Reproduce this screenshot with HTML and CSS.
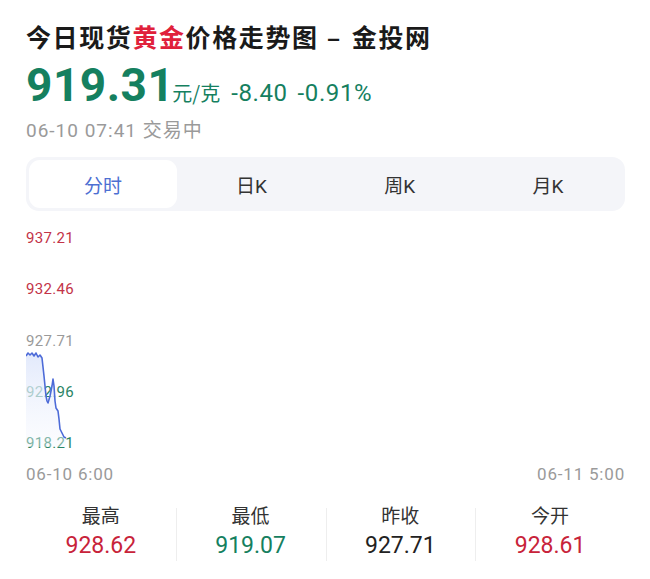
FILE: index.html
```html
<!DOCTYPE html>
<html lang="zh">
<head>
<meta charset="utf-8">
<title>今日现货黄金价格走势图 – 金投网</title>
<link rel="stylesheet" href="styles.css">
</head>
<body>
<div class="page">
  <h1 class="title">今日现货<span class="hl">黄金</span>价格走势图<span class="dash">–</span>金投网</h1>
  <div class="price-row">
    <span class="price">919.31</span>
    <span class="unit">元/克</span>
    <span class="chg">-8.40</span>
    <span class="chg">-0.91%</span>
  </div>
  <div class="meta">06-10 07:41 交易中</div>

  <div class="tabs">
    <div class="tab active">分时</div>
    <div class="tab">日K</div>
    <div class="tab">周K</div>
    <div class="tab">月K</div>
  </div>

  <div class="chart">
    <div class="ylabels">
      <span class="up">937.21</span>
      <span class="up">932.46</span>
      <span class="flat">927.71</span>
      <span class="down">922.96</span>
      <span class="down">918.21</span>
    </div>
    <svg class="plot" viewBox="0 0 599 223" preserveAspectRatio="none" xmlns="http://www.w3.org/2000/svg">
      <defs>
        <linearGradient id="fill" x1="0" y1="0" x2="0" y2="1">
          <stop offset="0" stop-color="#dfe7fb" stop-opacity="0.9"/>
          <stop offset="1" stop-color="#f6f8fe" stop-opacity="0.4"/>
        </linearGradient>
      </defs>
      <path d="M0,127 L2,124 L4,126 L6,124 L8,127 L10,124 L12,128 L14,126 L16,129 L18,147 L20,167 L21,172 L22,174 L24,167 L26,157 L27,150 L28,157 L29,172 L30,179 L32,182 L33,190 L34,200 L36,204 L38,208 L40,209 L40,218 L0,218 Z" fill="url(#fill)"/>
      <path d="M0,127 L2,124 L4,126 L6,124 L8,127 L10,124 L12,128 L14,126 L16,129 L18,147 L20,167 L21,172 L22,174 L24,167 L26,157 L27,150 L28,157 L29,172 L30,179 L32,182 L33,190 L34,200 L36,204 L38,208 L40,209" fill="none" stroke="#4d6bd8" stroke-width="1.6" stroke-linejoin="round"/>
    </svg>
  </div>
  <div class="xlabels">
    <span>06-10 6:00</span>
    <span>06-11 5:00</span>
  </div>

  <div class="stats">
    <div class="stat"><div class="lbl">最高</div><div class="val up">928.62</div></div>
    <div class="stat"><div class="lbl">最低</div><div class="val down">919.07</div></div>
    <div class="stat"><div class="lbl">昨收</div><div class="val flat">927.71</div></div>
    <div class="stat"><div class="lbl">今开</div><div class="val up">928.61</div></div>
  </div>
</div>
</body>
</html>
```
FILE: styles.css
```css
* { box-sizing: border-box; }
html, body { margin: 0; padding: 0; background: #fff; }
body {
  font-family: Roboto, "Noto Sans CJK SC", sans-serif;
  color: #222;
}
.page {
  padding: 20px 25px 0 26px;
}
.title {
  margin: 0;
  font-family: "Noto Sans CJK SC", sans-serif;
  font-size: 25px;
  font-weight: 700;
  line-height: 32px;
  color: #1a1a1a;
  letter-spacing: 1.6px;
}
.dash {
  margin: 0 10px 0 8px;
}
.hl { color: #e0213b; }
.price-row {
  display: flex;
  align-items: baseline;
  margin-top: 8px;
  height: 50px;
  color: #15805f;
}
.price {
  font-size: 46px;
  font-weight: 700;
  line-height: 50px;
  letter-spacing: 0.5px;
}
.unit {
  font-family: "Noto Sans CJK SC", sans-serif;
  font-size: 20px;
  margin-left: -2px;
  margin-right: 11px;
}
.chg {
  font-size: 24px;
  letter-spacing: 0.6px;
  margin-right: 10px;
}
.meta {
  margin-top: 9px;
  font-size: 19px;
  line-height: 24px;
  letter-spacing: 1px;
  color: #9a9a9a;
}
.tabs {
  display: grid;
  grid-template-columns: repeat(4, 1fr);
  margin-top: 14px;
  height: 54px;
  padding: 3px;
  background: #f4f5f9;
  border-radius: 13px;
}
.tab {
  display: flex;
  align-items: center;
  justify-content: center;
  font-size: 19px;
  color: #333;
  border-radius: 11px;
}
.tab.active {
  background: #fff;
  color: #4d6fd2;
}
.chart {
  position: relative;
  margin-top: 18px;
  height: 223px;
}
.ylabels {
  display: flex;
  flex-direction: column;
  justify-content: space-between;
  height: 223px;
  font-size: 15px;
  line-height: 18px;
  letter-spacing: 0.3px;
  position: relative;
  z-index: 0;
}
.plot {
  position: absolute;
  left: 0;
  top: 0;
  width: 100%;
  height: 100%;
  z-index: 1;
}
.ylabels .up { color: #c33348; }
.ylabels .flat { color: #9a9a9a; }
.ylabels .down { color: #2a8466; }
.xlabels {
  display: flex;
  justify-content: space-between;
  margin-top: 12px;
  font-size: 17px;
  line-height: 20px;
  letter-spacing: 0.8px;
  color: #9a9a9a;
}
.stats {
  display: grid;
  grid-template-columns: repeat(4, 1fr);
  margin-top: 18px;
}
.stat {
  display: flex;
  flex-direction: column;
  align-items: center;
  position: relative;
}
.stat + .stat::before {
  content: "";
  position: absolute;
  left: 0;
  top: 6px;
  bottom: 0;
  width: 1px;
  background: #eeeeee;
}
.lbl {
  font-family: "Noto Sans CJK SC", sans-serif;
  font-size: 19px;
  line-height: 26px;
  color: #333;
}
.val {
  font-size: 23px;
  line-height: 30px;
  margin-top: 3px;
}
.val.up { color: #c8233a; }
.val.down { color: #15805f; }
.val.flat { color: #222; }
```
